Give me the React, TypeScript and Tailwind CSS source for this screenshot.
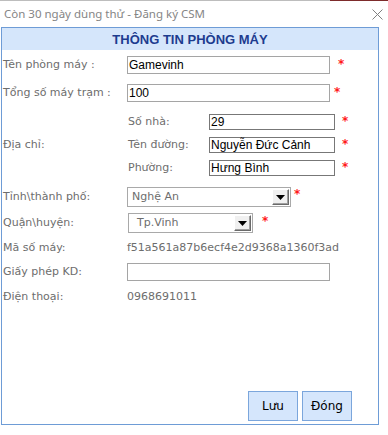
import React from "react";

const Star = ({ cls }: { cls: string }) => (
  <span className={`text-[#ff1a1a] font-bold text-[12px] leading-none font-['DejaVu_Sans',sans-serif] ${cls}`}>*</span>
);

const DropBtn = () => (
  <div className="ml-auto mr-px w-[17px] h-[16px] bg-[#f0f0f0] border-t border-l border-t-white border-l-white border-r border-b border-r-[#6a6a6a] border-b-[#6a6a6a] flex items-center justify-center shadow-[inset_-1px_-1px_0_#a0a0a0]">
    <svg width="9" height="5" viewBox="0 0 9 5">
      <polygon points="0,0 9,0 4.5,5" fill="#000" />
    </svg>
  </div>
);

export default function App() {
  const label = "text-[11px] text-[#6d6d6d] font-['DejaVu_Sans',sans-serif]";
  const val = "text-[12px] text-black font-['Liberation_Sans',Arial,sans-serif] leading-none";
  return (
    <div className="w-[388px] h-[435px] bg-white overflow-hidden font-['DejaVu_Sans',sans-serif]">
      <div className="flex h-px">
        <div className="w-[330px] bg-[#bdbdbd]" />
        <div className="flex-1 bg-[#7d2b2b]" />
      </div>
      <div className="h-[26px] flex items-center pl-[4px]">
        <span className="text-[11.5px] text-[#858585] font-['Noto_Sans',sans-serif] leading-none">
          Còn 30 ngày dùng thử - Đăng ký CSM
        </span>
        <svg className="ml-auto mr-[5px]" width="11" height="11" viewBox="0 0 11 11">
          <path d="M0.5 0.5 L10.5 10.5 M10.5 0.5 L0.5 10.5" stroke="#808080" strokeWidth="1" />
        </svg>
      </div>
      <div className="ml-px w-[378px] h-[398px] border border-[#6e9cd6] flex flex-col">
        <div className="h-[22px] bg-[#d5e6fb] flex items-center justify-center">
          <span className="font-['Liberation_Sans',Arial,sans-serif] font-bold text-[13px] text-[#1d3c8f] leading-none">
            THÔNG TIN PHÒNG MÁY
          </span>
        </div>

        <div className="mt-[6px] h-[18px] flex items-center pl-px">
          <div className={`w-[124px] ${label}`}>Tên phòng máy :</div>
          <div className={`w-[203px] h-[18px] border border-[#a5a5a5] px-px flex items-center ${val}`}>Gamevinh</div>
          <Star cls="ml-[8px] self-start mt-[2px]" />
        </div>

        <div className="mt-[10px] h-[18px] flex items-center pl-px">
          <div className={`w-[124px] ${label}`}>Tổng số máy trạm :</div>
          <div className={`w-[203px] h-[18px] border border-[#a5a5a5] px-px flex items-center ${val}`}>100</div>
          <Star cls="ml-[4px] self-start mt-[2px]" />
        </div>

        <div className="mt-[12px] flex items-center pl-px">
          <div className={`w-[124px] ${label}`}>Địa chỉ:</div>
          <div className="flex flex-col gap-[7px]">
            {[
              ["Số nhà:", "29"],
              ["Tên đường:", "Nguyễn Đức Cảnh"],
              ["Phường:", "Hưng Bình"],
            ].map(([l, v]) => (
              <div key={l} className="h-[16px] flex items-center">
                <div className={`w-[82px] pl-px ${label}`}>{l}</div>
                <div className={`w-[126px] h-[16px] border border-[#777777] px-px flex items-center ${val}`}>{v}</div>
                <Star cls="ml-[7px] self-start mt-[1px]" />
              </div>
            ))}
          </div>
        </div>

        <div className="mt-[11px] h-[20px] flex items-center pl-px">
          <div className={`w-[124px] ${label}`}>Tỉnh\thành phố:</div>
          <div className="w-[164px] h-[20px] border border-[#a9a9a9] flex items-center">
            <span className={`pl-[4px] ${label}`}>Nghệ An</span>
            <DropBtn />
          </div>
          <Star cls="ml-[3px] self-start mt-[1px]" />
        </div>

        <div className="mt-[6px] h-[20px] flex items-center pl-px">
          <div className={`w-[124px] ${label}`}>Quận\huyện:</div>
          <div className="ml-px w-[125px] h-[20px] border border-[#a9a9a9] flex items-center">
            <span className={`pl-[8px] ${label}`}>Tp.Vinh</span>
            <DropBtn />
          </div>
          <Star cls="ml-[9px] self-start mt-[2px]" />
        </div>

        <div className="mt-[6px] h-[18px] flex items-center pl-px">
          <div className={`w-[124px] ${label}`}>Mã số máy:</div>
          <div className={label}>f51a561a87b6ecf4e2d9368a1360f3ad</div>
        </div>

        <div className="mt-[6px] h-[18px] flex items-center pl-px">
          <div className={`w-[124px] ${label}`}>Giấy phép KD:</div>
          <div className="w-[203px] h-[18px] border border-[#a5a5a5]" />
        </div>

        <div className="mt-[7px] h-[18px] flex items-center pl-px">
          <div className={`w-[124px] ${label}`}>Điện thoại:</div>
          <div className={label}>0968691011</div>
        </div>

        <div className="flex-1" />
        <div className="flex justify-end gap-[4px] pr-[26px] mb-[3px]">
          <button className="w-[50px] h-[30px] bg-[#d5e6fc] border border-[#7ba6dc] text-[12px] text-black font-['DejaVu_Sans',sans-serif]">Lưu</button>
          <button className="w-[50px] h-[30px] bg-[#d5e6fc] border border-[#7ba6dc] text-[12px] text-black font-['DejaVu_Sans',sans-serif]">Đóng</button>
        </div>
      </div>
    </div>
  );
}
